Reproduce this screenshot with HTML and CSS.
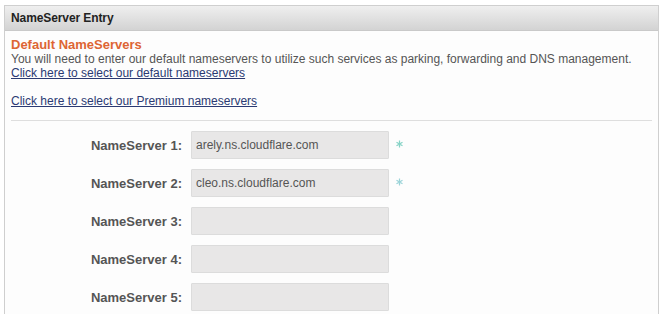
FILE: index.html
```html
<!DOCTYPE html>
<html>
<head>
    <title>NameServer Entry</title>
    <meta name="viewport" content="width=device-width, initial-scale=1.0">
    <link rel="stylesheet" href="styles.css">
</head>
<body>
    <div class="panel">
        <div class="panel-head">NameServer Entry</div>

        <div class="panel-body">
            <h2>Default NameServers</h2>
            <p class="intro">
                You will need to enter our default nameservers to utilize such services as parking, forwarding and DNS management.<br>
                <a href="#">Click here to select our default nameservers</a><br>
                <br>
                <a href="#">Click here to select our Premium nameservers</a>
            </p>

            <hr class="divider">

            <!-- 네임서버 입력 -->
            <form class="ns-form">
                <div class="ns-row">
                    <label for="ns1">NameServer 1:</label>
                    <input type="text" id="ns1" class="ns-input" value="arely.ns.cloudflare.com">
                    <svg class="req" width="7" height="8" viewBox="0 0 7 8">
                        <path d="M3.5 0.5V7.5M0.5 2.2L6.5 5.8M0.5 5.8L6.5 2.2" stroke="#86d3c6" stroke-width="1.2" fill="none"/>
                    </svg>
                </div>
                <div class="ns-row">
                    <label for="ns2">NameServer 2:</label>
                    <input type="text" id="ns2" class="ns-input" value="cleo.ns.cloudflare.com">
                    <svg class="req" width="7" height="8" viewBox="0 0 7 8">
                        <path d="M3.5 0.5V7.5M0.5 2.2L6.5 5.8M0.5 5.8L6.5 2.2" stroke="#9ad3d8" stroke-width="1.2" fill="none"/>
                    </svg>
                </div>
                <div class="ns-row">
                    <label for="ns3">NameServer 3:</label>
                    <input type="text" id="ns3" class="ns-input">
                </div>
                <div class="ns-row">
                    <label for="ns4">NameServer 4:</label>
                    <input type="text" id="ns4" class="ns-input">
                </div>
                <div class="ns-row">
                    <label for="ns5">NameServer 5:</label>
                    <input type="text" id="ns5" class="ns-input">
                </div>
            </form>
        </div>
    </div>
</body>
</html>
```

FILE: styles.css
```css
* {
    margin: 0;
    padding: 0;
    box-sizing: border-box;
    font-family: 'Liberation Sans', Arial, sans-serif;
}

body {
    background: white;
    padding: 5px 4px 0 4px;
}

.panel {
    border: 1px solid #cfcfcf;
    background: #fdfdfd;
    height: 320px;
}

.panel-head {
    height: 25px;
    padding: 0 6px;
    background: linear-gradient(to bottom, #efefef 0%, #d3d3d3 100%);
    border-bottom: 1px solid #c9c9c9;
    color: #222;
    font-size: 12px;
    font-weight: bold;
    line-height: 24px;
    letter-spacing: -0.1px;
}

.panel-body {
    padding: 5px 6px 0 6px;
}

h2 {
    color: #dd6534;
    font-size: 13px;
    font-weight: bold;
    line-height: 15px;
    padding-top: 1px;
}

.intro {
    color: #555;
    font-size: 12px;
    line-height: 14px;
}

.intro a {
    color: #2b3a73;
    text-decoration: underline;
}

.divider {
    border: none;
    border-top: 1px solid #dedede;
    margin: 12px 0 10px 0;
}

.ns-form {
    display: flex;
    flex-direction: column;
    gap: 10px;
}

.ns-row {
    display: flex;
    align-items: center;
    height: 28px;
}

.ns-row label {
    width: 175px;
    padding-right: 4px;
    text-align: right;
    color: #555;
    font-size: 13px;
    font-weight: bold;
}

.ns-input {
    width: 198px;
    height: 28px;
    margin-left: 5px;
    padding: 0 4px;
    background: #e8e7e7;
    border: 1px solid #dcdcdc;
    border-radius: 1px;
    color: #555;
    font-size: 12px;
    outline: none;
}

.req {
    margin-left: 7px;
    margin-top: -2px;
}
```
